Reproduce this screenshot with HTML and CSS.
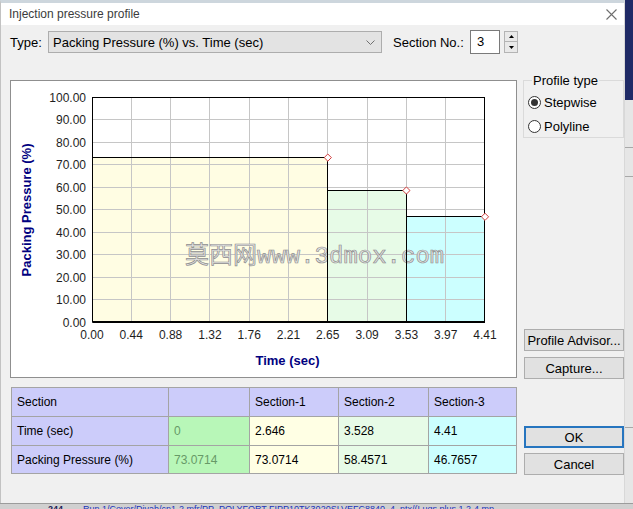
FILE: index.html
```html
<!DOCTYPE html>
<html lang="en">
<head>
    <meta charset="UTF-8">
    <meta name="viewport" content="width=device-width, initial-scale=1.0">
    <title>Injection pressure profile</title>
    <link rel="stylesheet" href="styles.css">
</head>
<body>
    <div class="screen">
        <div class="dialog">
            <div class="titlebar">
                <span>Injection pressure profile</span>
                <svg class="close" width="11" height="11" viewBox="0 0 11 11">
                    <path d="M0.5 0.5L10.5 10.5M10.5 0.5L0.5 10.5" stroke="#6e6e6e" stroke-width="1.1" fill="none"/>
                </svg>
            </div>

            <div class="dlg-body">
                <div class="toprow">
                    <span class="lbl-type">Type:</span>
                    <div class="combo">
                        <span>Packing Pressure (%) vs. Time (sec)</span>
                        <svg width="9" height="5" viewBox="0 0 9 5">
                            <path d="M0.5 0.5L4.5 4.5L8.5 0.5" stroke="#707070" fill="none"/>
                        </svg>
                    </div>
                    <span class="lbl-sec">Section No.:</span>
                    <div class="num">3</div>
                    <div class="spin">
                        <div class="spin-btn"><svg width="5" height="3" viewBox="0 0 5 3"><path d="M2.5 0L5 3H0Z" fill="#000"/></svg></div>
                        <div class="spin-btn"><svg width="5" height="3" viewBox="0 0 5 3"><path d="M0 0H5L2.5 3Z" fill="#000"/></svg></div>
                    </div>
                </div>

                <div class="main">
                    <div class="left">
                        <div class="chart">
                            <svg width="505" height="296" viewBox="11 81 505 296">
                                <!-- section fills -->
                                <rect x="92" y="157.6" width="235.8" height="164.4" fill="#fffde3"/>
                                <rect x="327.8" y="190.5" width="78.6" height="131.5" fill="#e7fbe7"/>
                                <rect x="406.4" y="216.8" width="78.6" height="105.2" fill="#ccffff"/>

                                <!-- grid -->
                                <path class="gridline" d="M131.5 97V322M170.5 97V322M209.5 97V322M249.5 97V322M288.5 97V322M327.5 97V322M367.5 97V322M406.5 97V322M445.5 97V322
                                    M92 299.5H485M92 277.5H485M92 254.5H485M92 232.5H485M92 209.5H485M92 187.5H485M92 164.5H485M92 142.5H485M92 119.5H485"/>

                                <!-- watermark -->
                                <text class="wm" x="185" y="263">莫西网www.3dmox.com</text>

                                <!-- profile steps -->
                                <path class="step" d="M92 157.5H327.5V322M327.5 190.5H406.5V322M406.5 216.5H485"/>
                                <rect class="frame" x="92.5" y="97.5" width="392" height="224"/>
                                <path class="axis" d="M92.5 97V322.5H485"/>

                                <polygon class="pt" points="327.8,154 331.4,157.6 327.8,161.2 324.2,157.6"/>
                                <polygon class="pt" points="406.4,186.9 410,190.5 406.4,194.1 402.8,190.5"/>
                                <polygon class="pt" points="485,213.2 488.6,216.8 485,220.4 481.4,216.8"/>

                                <!-- y ticks -->
                                <g class="tick ytick">
                                    <text x="86" y="101.5">100.00</text>
                                    <text x="86" y="124">90.00</text>
                                    <text x="86" y="146.5">80.00</text>
                                    <text x="86" y="169">70.00</text>
                                    <text x="86" y="191.5">60.00</text>
                                    <text x="86" y="214">50.00</text>
                                    <text x="86" y="236.5">40.00</text>
                                    <text x="86" y="259">30.00</text>
                                    <text x="86" y="281.5">20.00</text>
                                    <text x="86" y="304">10.00</text>
                                    <text x="86" y="326.5">0.00</text>
                                </g>

                                <!-- x ticks -->
                                <g class="tick xtick">
                                    <text x="92" y="339">0.00</text>
                                    <text x="131.3" y="339">0.44</text>
                                    <text x="170.6" y="339">0.88</text>
                                    <text x="209.9" y="339">1.32</text>
                                    <text x="249.2" y="339">1.76</text>
                                    <text x="288.5" y="339">2.21</text>
                                    <text x="327.8" y="339">2.65</text>
                                    <text x="367.1" y="339">3.09</text>
                                    <text x="406.4" y="339">3.53</text>
                                    <text x="445.7" y="339">3.97</text>
                                    <text x="485" y="339">4.41</text>
                                </g>

                                <text class="axis-title" x="287.5" y="364.5">Time (sec)</text>
                                <text class="axis-title" transform="translate(31 210) rotate(-90)">Packing Pressure (%)</text>
                            </svg>
                        </div>

                        <table class="sections">
                            <colgroup>
                                <col style="width:157px">
                                <col style="width:81px">
                                <col style="width:89px">
                                <col style="width:90px">
                                <col style="width:88px">
                            </colgroup>
                            <tr class="row-head">
                                <td class="head">Section</td>
                                <td class="head"></td>
                                <td class="head">Section-1</td>
                                <td class="head">Section-2</td>
                                <td class="head">Section-3</td>
                            </tr>
                            <tr class="row-time">
                                <td class="head">Time (sec)</td>
                                <td class="start">0</td>
                                <td class="s1">2.646</td>
                                <td class="s2">3.528</td>
                                <td class="s3">4.41</td>
                            </tr>
                            <tr class="row-press">
                                <td class="head">Packing Pressure (%)</td>
                                <td class="start">73.0714</td>
                                <td class="s1">73.0714</td>
                                <td class="s2">58.4571</td>
                                <td class="s3">46.7657</td>
                            </tr>
                        </table>
                    </div>

                    <div class="right">
                        <fieldset class="group">
                            <legend>Profile type</legend>
                            <div class="radio"><span class="dot checked"></span>Stepwise</div>
                            <div class="radio"><span class="dot"></span>Polyline</div>
                        </fieldset>

                        <div class="btn advisor">Profile Advisor...</div>
                        <div class="btn capture">Capture...</div>
                        <div class="btn ok">OK</div>
                        <div class="btn cancel">Cancel</div>
                    </div>
                </div>
            </div>
        </div>

        <div class="side">
            <div class="side-top"></div>
            <div class="side-line l1"></div>
            <div class="side-line l2"></div>
            <div class="side-line l3"></div>
        </div>
    </div>

    <div class="under">
        <b>244</b><span>Run 1/Cover/Divah/cn1-2.mfr/PP_POLYFORT FIPP10TK3020SLVEFC8840_4_ntx/(Lugs plus 1 2-4.mp</span>
    </div>
</body>
</html>
```

FILE: styles.css
```css
* {
    box-sizing: border-box;
}

body {
    margin: 0;
    width: 633px;
    height: 509px;
    overflow: hidden;
    background: #c9c9c9;
    font-family: "Liberation Sans", Arial, sans-serif;
    font-size: 13px;
    color: #000;
}

.screen {
    display: flex;
    height: 503px;
}

.dialog {
    width: 625px;
    display: flex;
    flex-direction: column;
    background: #f0f0f0;
    border-top: 3px solid #cdd6dd;
    border-left: 1px solid #c2c2c2;
    border-right: 1px solid #d8d8d8;
}

.titlebar {
    height: 22px;
    flex: none;
    display: flex;
    align-items: center;
    justify-content: space-between;
    padding: 0 7px 0 8px;
    background: #fff;
    font-size: 12px;
    color: #3c3c3c;
}

.dlg-body {
    flex: 1;
    padding: 5px 0 0 9px;
}

/* top row */
.toprow {
    display: flex;
    align-items: center;
    height: 24px;
}

.lbl-type {
    width: 38px;
}

.combo {
    width: 334px;
    height: 22px;
    display: flex;
    align-items: center;
    justify-content: space-between;
    padding: 0 6px 0 4px;
    background: #e3e3e3;
    border: 1px solid #adadad;
}

.lbl-sec {
    width: 77px;
    margin-left: 11px;
}

.num {
    width: 30px;
    height: 24px;
    line-height: 22px;
    padding-left: 6px;
    background: #fff;
    border: 1px solid #7a7a7a;
}

.spin {
    width: 14px;
    height: 22px;
    margin-left: 4px;
    display: flex;
    flex-direction: column;
}

.spin-btn {
    height: 11px;
    display: flex;
    align-items: center;
    justify-content: center;
    background: #e9e9e9;
    border: 1px solid #b4b4b4;
}

.spin-btn + .spin-btn {
    border-top: none;
}

/* main area */
.main {
    display: flex;
    margin-top: 19px;
}

.left {
    width: 507px;
    padding-top: 7px;
    display: flex;
    flex-direction: column;
    gap: 9px;
}

.chart {
    height: 298px;
    background: #fff;
    border: 1px solid #8f8f8f;
}

.chart svg {
    display: block;
}

.gridline {
    stroke: #c6c6c6;
    stroke-width: 1;
    fill: none;
}

.step {
    stroke: #000;
    stroke-width: 1;
    fill: none;
    shape-rendering: crispEdges;
}

.frame {
    stroke: #000;
    fill: none;
}

.axis {
    stroke: #000;
    stroke-width: 1;
    fill: none;
}

.pt {
    fill: #fff;
    stroke: #d23c3c;
    stroke-width: 1;
}

.tick text {
    font-family: "Liberation Sans", Arial, sans-serif;
    font-size: 12px;
    fill: #1e1e1e;
}

.ytick text {
    text-anchor: end;
}

.xtick text {
    text-anchor: middle;
}

.axis-title {
    font-family: "Liberation Sans", Arial, sans-serif;
    font-size: 13px;
    font-weight: bold;
    fill: #000080;
    text-anchor: middle;
}

.wm {
    font-family: "Liberation Mono", "Noto Sans CJK SC", monospace;
    font-size: 24px;
    fill: #e4e4e4;
    stroke: #8e8e8e;
    stroke-width: 0.7;
}

/* section table */
.sections {
    width: 505px;
    margin-left: 1px;
    border-collapse: collapse;
    table-layout: fixed;
    font-size: 12px;
    border: 1px solid #7c7c7c;
}

.sections td {
    border: 1px solid #a4a4a4;
    padding: 0 5px;
    vertical-align: middle;
}

.row-head td,
.row-time td {
    height: 29px;
}

.row-press td {
    height: 28px;
}

.sections .head {
    background: #ccccfa;
}

.sections .start {
    background: #b8f7b8;
    color: #679a67;
}

.sections .s1 {
    background: #ffffe4;
}

.sections .s2 {
    background: #e7fbe7;
}

.sections .s3 {
    background: #ccffff;
}

/* right column */
.right {
    width: 102px;
    margin-left: 6px;
    display: flex;
    flex-direction: column;
}

.group {
    width: 101px;
    height: 65px;
    margin: 0;
    padding: 0 0 0 4px;
    border: 1px solid #dadada;
}

.group legend {
    margin-left: 4px;
    padding: 0 1px;
    line-height: 15px;
}

.radio {
    height: 16px;
    display: flex;
    align-items: center;
    gap: 3px;
    margin-top: 6px;
}

.radio + .radio {
    margin-top: 8px;
}

.dot {
    width: 13px;
    height: 13px;
    border-radius: 50%;
    border: 1px solid #333;
    background: #fff;
    display: flex;
    align-items: center;
    justify-content: center;
}

.dot.checked::after {
    content: "";
    width: 7px;
    height: 7px;
    border-radius: 50%;
    background: #333;
}

.btn {
    width: 100px;
    height: 22px;
    margin-left: 1px;
    display: flex;
    align-items: center;
    justify-content: center;
    background: #e1e1e1;
    border: 1px solid #adadad;
}

.advisor {
    margin-top: 191px;
}

.capture {
    margin-top: 6px;
}

.ok {
    margin-top: 47px;
    border: 2px solid #2675bf;
}

.cancel {
    margin-top: 5px;
}

/* window behind the dialog */
.side {
    flex: 1;
    position: relative;
    background: #e6e6e6;
}

.side-top {
    height: 100px;
    background: #1f2a66;
}

.side-line {
    position: absolute;
    left: 0;
    right: 0;
    height: 1px;
    background: #a8a8a8;
}

.l1 { top: 147px; }
.l2 { top: 176px; }
.l3 { top: 427px; }

.under {
    height: 6px;
    overflow: hidden;
    background: #d0d0d0;
    border-top: 1px solid #9c9c9c;
    font-size: 9px;
    line-height: 11px;
    white-space: nowrap;
    padding-left: 48px;
}

.under b {
    color: #1b1b55;
    margin-right: 20px;
}

.under span {
    color: #2233bb;
}
```
